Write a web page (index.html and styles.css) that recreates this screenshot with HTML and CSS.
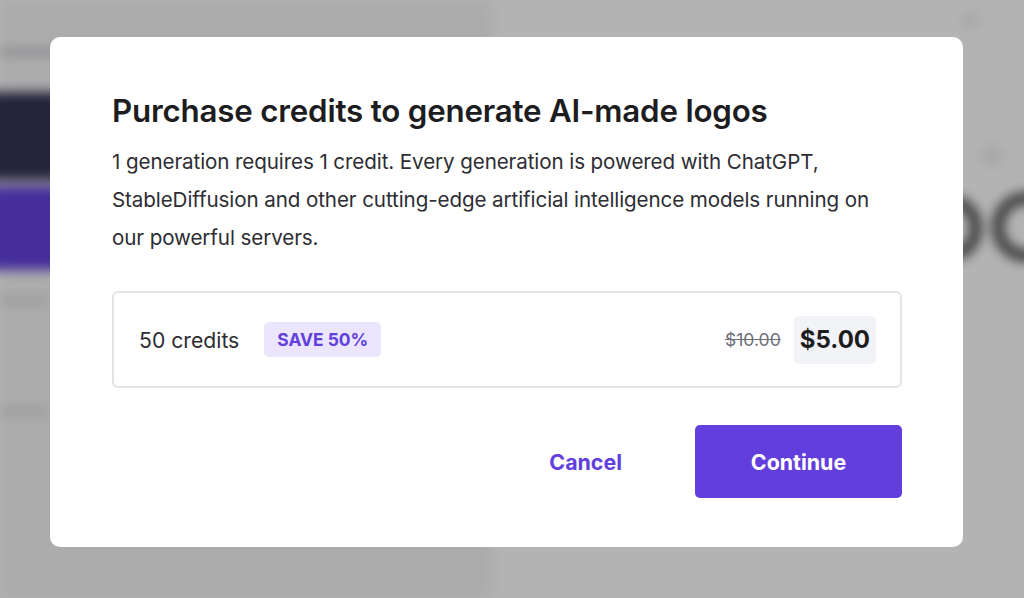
FILE: index.html
```html
<!DOCTYPE html>
<html>
<head>
<meta charset="utf-8">
<link rel="stylesheet" href="styles.css">
</head>
<body>
<div class="backdrop">
  <div class="bg-left">
    <div class="bg-streak s1"></div>
    <div class="bg-dark"></div>
    <div class="bg-purple"></div>
    <div class="bg-streak s2"></div>
    <div class="bg-streak s3"></div>
  </div>
  <div class="bg-right">
    <div class="bg-dot d1"></div>
    <div class="bg-dot d2"></div>
    <div class="bg-ring r1"></div>
    <div class="bg-ring r2"></div>
  </div>
</div>
<div class="overlay">
  <div class="modal">
    <h1 class="title">Purchase credits to generate AI-made logos</h1>
    <p class="desc">1 generation requires 1 credit. Every generation is powered with ChatGPT, StableDiffusion and other cutting-edge artificial intelligence models running on our powerful servers.</p>
    <div class="plan">
      <div class="plan-left">
        <span class="plan-name">50 credits</span>
        <span class="badge">SAVE 50%</span>
      </div>
      <div class="plan-right">
        <span class="old-price">$10.00</span>
        <span class="price">$5.00</span>
      </div>
    </div>
    <div class="actions">
      <button class="btn-cancel">Cancel</button>
      <button class="btn-continue">Continue</button>
    </div>
  </div>
</div>
</body>
</html>
```
FILE: styles.css
```css
* { box-sizing: border-box; }
html, body { margin: 0; padding: 0; }
body {
  width: 1024px;
  height: 598px;
  overflow: hidden;
  position: relative;
  font-family: "Inter", "Noto Sans", sans-serif;
  background: #b2b2b2;
}
.backdrop {
  position: absolute;
  inset: 0;
  display: flex;
  filter: blur(6px);
}
.bg-left {
  width: 492px;
  height: 100%;
  background: #acacad;
  position: relative;
}
.bg-right {
  flex: 1;
  height: 100%;
  background: #b3b3b3;
  position: relative;
}
.bg-dark {
  position: absolute;
  left: -20px; top: 92px;
  width: 200px; height: 88px;
  background: #25233a;
}
.bg-purple {
  position: absolute;
  left: -20px; top: 186px;
  width: 200px; height: 84px;
  background: #452e9c;
}
.bg-streak {
  position: absolute;
  height: 8px;
  background: #8d8d8f;
}
.s1 { left: 0; top: 48px; width: 60px; }
.s2 { left: 0; top: 298px; width: 50px; height: 6px; background: #959597; }
.s3 { left: 0; top: 408px; width: 50px; height: 6px; background: #959597; }
.bg-dot {
  position: absolute;
  border-radius: 50%;
  background: #a6a6a6;
}
.d1 { left: 490px; top: 145px; width: 20px; height: 20px; }
.d2 { left: 470px; top: 12px; width: 16px; height: 16px; }
.bg-ring {
  position: absolute;
  border-radius: 50%;
  border: 12px solid #3c3c3c;
}
.r1 { left: 430px; top: 196px; width: 60px; height: 64px; }
.r2 { left: 500px; top: 192px; width: 70px; height: 70px; }
.overlay {
  position: absolute;
  inset: 0;
  padding: 37px 0 0 50px;
}
.modal {
  width: 913px;
  height: 510px;
  background: #ffffff;
  border-radius: 10px;
  padding: 55px 61px 0 62px;
}
.title {
  margin: 0;
  font-size: 31.3px;
  font-weight: 600;
  line-height: 38px;
  color: #1d1d1f;
  letter-spacing: -0.2px;
  white-space: nowrap;
}
.desc {
  margin: 13px 0 0 0;
  font-size: 20.6px;
  line-height: 38px;
  color: #2d2d33;
  letter-spacing: -0.1px;
}
.plan {
  margin-top: 34px;
  height: 97px;
  border: 2px solid #e4e4e8;
  border-radius: 6px;
  display: flex;
  align-items: center;
  justify-content: space-between;
  padding: 0 24px 0 25px;
}
.plan-left {
  display: flex;
  align-items: center;
  gap: 25px;
}
.plan-name {
  font-size: 21.2px;
  color: #2d2d33;
}
.badge {
  background: #ebe5fe;
  color: #6240dd;
  font-weight: 700;
  font-size: 17.4px;
  padding: 0 13px;
  height: 35px;
  line-height: 35px;
  border-radius: 5px;
}
.plan-right {
  display: flex;
  align-items: center;
  gap: 13px;
}
.old-price {
  font-size: 17.6px;
  color: #6f6f7a;
  text-decoration: line-through;
}
.price {
  background: #f2f3f6;
  border-radius: 5px;
  height: 48px;
  line-height: 48px;
  padding: 0 6px;
  font-size: 24px;
  font-weight: 700;
  color: #1d1d1f;
}
.actions {
  margin-top: 37px;
  display: flex;
  justify-content: flex-end;
  align-items: center;
  gap: 73px;
}
button {
  font-family: inherit;
  border: none;
  cursor: pointer;
}
.btn-cancel {
  background: none;
  color: #6240dd;
  font-size: 21.4px;
  font-weight: 700;
  padding: 0;
}
.btn-continue {
  width: 207px;
  height: 73px;
  background: #623fdc;
  color: #ffffff;
  font-size: 21.4px;
  font-weight: 700;
  border-radius: 5px;
}
```
